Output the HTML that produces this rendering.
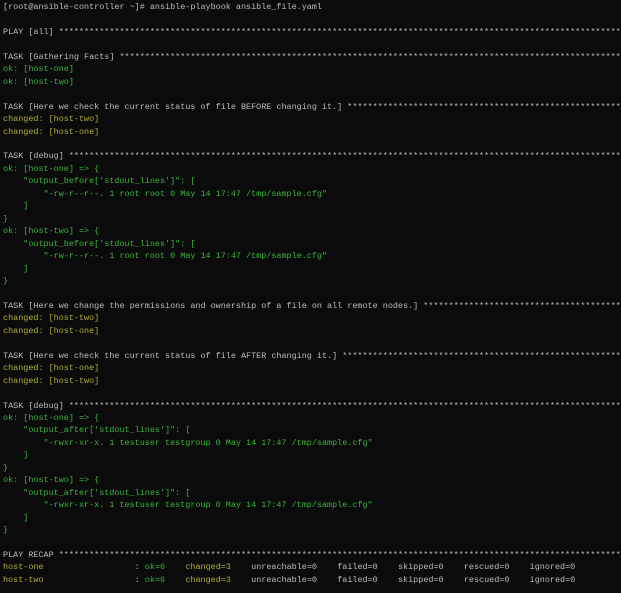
<!DOCTYPE html>
<html><head><meta charset="utf-8"><style>
html,body{margin:0;padding:0;background:#0b0b0b;width:621px;height:593px;overflow:hidden}
pre{margin:0;padding:1px 0 0 3px;font-family:"Liberation Mono",monospace;font-size:8.45px;line-height:12.45px;color:#bdbdbd;white-space:pre;overflow:hidden;width:618px}
.g{color:#3cb43c}.y{color:#b0b03a}
</style></head><body><pre>[root@ansible-controller ~]# ansible-playbook ansible_file.yaml

PLAY [all] ************************************************************************************************************************

TASK [Gathering Facts] ************************************************************************************************************
<span class="g">ok: [host-one]</span>
<span class="g">ok: [host-two]</span>

TASK [Here we check the current status of file BEFORE changing it.] ***************************************************************
<span class="y">changed: [host-two]</span>
<span class="y">changed: [host-one]</span>

TASK [debug] **********************************************************************************************************************
<span class="g">ok: [host-one] =&gt; {
    "output_before['stdout_lines']": [
        "-rw-r--r--. 1 root root 0 May 14 17:47 /tmp/sample.cfg"
    ]
}
ok: [host-two] =&gt; {
    "output_before['stdout_lines']": [
        "-rw-r--r--. 1 root root 0 May 14 17:47 /tmp/sample.cfg"
    ]
}</span>

TASK [Here we change the permissions and ownership of a file on all remote nodes.] ************************************************
<span class="y">changed: [host-two]</span>
<span class="y">changed: [host-one]</span>

TASK [Here we check the current status of file AFTER changing it.] ****************************************************************
<span class="y">changed: [host-one]</span>
<span class="y">changed: [host-two]</span>

TASK [debug] **********************************************************************************************************************
<span class="g">ok: [host-one] =&gt; {
    "output_after['stdout_lines']": [
        "-rwxr-xr-x. 1 testuser testgroup 0 May 14 17:47 /tmp/sample.cfg"
    ]
}
ok: [host-two] =&gt; {
    "output_after['stdout_lines']": [
        "-rwxr-xr-x. 1 testuser testgroup 0 May 14 17:47 /tmp/sample.cfg"
    ]
}</span>

PLAY RECAP ************************************************************************************************************************
<span class="y">host-one</span>                  : <span class="g">ok=6</span>    <span class="y">changed=3</span>    unreachable=0    failed=0    skipped=0    rescued=0    ignored=0
<span class="y">host-two</span>                  : <span class="g">ok=6</span>    <span class="y">changed=3</span>    unreachable=0    failed=0    skipped=0    rescued=0    ignored=0
</pre></body></html>
